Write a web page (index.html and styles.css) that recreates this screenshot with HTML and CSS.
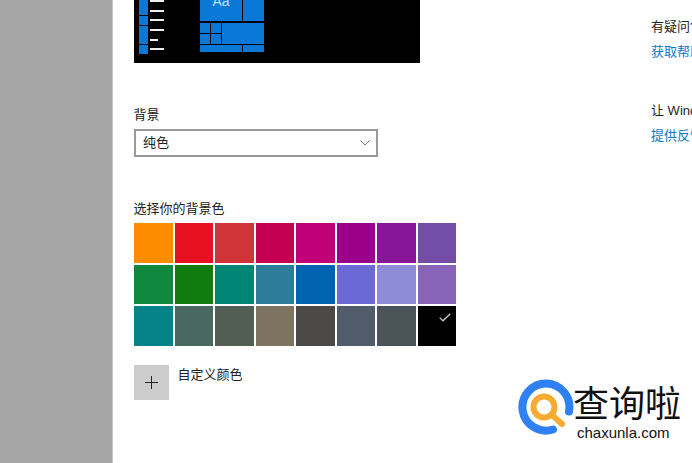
FILE: index.html
```html
<!DOCTYPE html>
<html lang="zh-CN">
<head>
  <meta charset="UTF-8">
  <meta name="viewport" content="width=device-width,initial-scale=1.0">
  <title>背景</title>
  <link rel="stylesheet" href="styles.css">
</head>
<body>

  <div class="sidebar"></div>

  <div class="main">
    <!-- preview of the desktop, top is cut off by the window -->
    <div class="preview">
      <div class="mini-menu">
        <div class="mini-row"><i></i><b></b></div>
        <div class="mini-row"><i></i><b></b></div>
        <div class="mini-row"><i></i><b></b></div>
        <div class="mini-row"><i></i><b></b></div>
        <div class="mini-row"><i></i><b class="short"></b></div>
        <div class="mini-row"><i></i><b></b></div>
      </div>
      <div class="mini-tiles">
        <div class="tiles-top">
          <div class="tile tile-aa">Aa</div>
          <div class="tile"></div>
        </div>
        <div class="tiles-mid">
          <div class="tile"></div>
          <div class="tile"></div>
          <div class="tile tile-big"></div>
          <div class="tile"></div>
          <div class="tile"></div>
        </div>
        <div class="tiles-bottom">
          <div class="tile"></div>
          <div class="tile"></div>
        </div>
      </div>
    </div>

    <div class="label">背景</div>
    <div class="select">
      <span>纯色</span>
      <svg class="chevron" width="10" height="6" viewBox="0 0 10 6"><path d="M.5.5 5 5 9.5.5" fill="none" stroke="#777" stroke-width="1"/></svg>
    </div>

    <div class="label">选择你的背景色</div>
    <div class="swatches">
      <div class="swatch c1"></div>
      <div class="swatch c2"></div>
      <div class="swatch c3"></div>
      <div class="swatch c4"></div>
      <div class="swatch c5"></div>
      <div class="swatch c6"></div>
      <div class="swatch c7"></div>
      <div class="swatch c8"></div>
      <div class="swatch c9"></div>
      <div class="swatch c10"></div>
      <div class="swatch c11"></div>
      <div class="swatch c12"></div>
      <div class="swatch c13"></div>
      <div class="swatch c14"></div>
      <div class="swatch c15"></div>
      <div class="swatch c16"></div>
      <div class="swatch c17"></div>
      <div class="swatch c18"></div>
      <div class="swatch c19"></div>
      <div class="swatch c20"></div>
      <div class="swatch c21"></div>
      <div class="swatch c22"></div>
      <div class="swatch c23"></div>
      <div class="swatch c24 selected">
        <svg width="12" height="9" viewBox="0 0 12 9"><path d="M.7 4.6 4 7.8 11.3.8" fill="none" stroke="#ccc" stroke-width="1.2"/></svg>
      </div>
    </div>

    <div class="custom">
      <div class="custom-btn">
        <svg width="13" height="13" viewBox="0 0 13 13"><path d="M6.5 0v13M0 6.5h13" stroke="#222" stroke-width="1"/></svg>
      </div>
      <span>自定义颜色</span>
    </div>
  </div>

  <div class="aside">
    <div class="help">
      <p>有疑问?</p>
      <a>获取帮助</a>
    </div>
    <div class="help">
      <p>让 Windows 变得更好</p>
      <a>提供反馈</a>
    </div>
  </div>

  <!-- watermark -->
  <div class="logo">
    <svg class="logo-icon" width="60" height="60" viewBox="0 0 60 60">
      <path d="M54 33.5A23.5 23.5 0 1 0 38 51.5" fill="none" stroke="#2f80f2" stroke-width="8" stroke-linecap="round"/>
      <circle cx="29" cy="29" r="10.5" fill="none" stroke="#f8ab32" stroke-width="6"/>
      <path d="M37 37 47 46" stroke="#f8ab32" stroke-width="6" stroke-linecap="round"/>
    </svg>
    <div class="logo-text">
      <div class="logo-cn">查询啦</div>
      <div class="logo-en">chaxunla.com</div>
    </div>
  </div>

</body>
</html>
```

FILE: styles.css
```css
*{box-sizing:border-box;margin:0;padding:0}
html,body{height:100%}
body{
  width:692px;
  height:463px;
  display:flex;
  overflow:hidden;
  position:relative;
  background:#fff;
  color:#222;
  font-family:"Liberation Sans","Noto Sans CJK SC",sans-serif;
  font-size:13px;
  line-height:20px;
}
.sidebar{
  flex:none;
  width:113px;
  background:#a6a6a6;
  border-right:1px solid #c4c4c4;
}
.main{
  flex:none;
  width:538px;
  padding-left:21px;
}
/* preview */
.preview{
  width:286px;
  height:63px;
  background:#000;
  display:flex;
  align-items:flex-start;
  padding-left:5px;
  overflow:hidden;
}
.mini-menu{
  width:61px;
  flex:none;
  margin-top:-3.5px;
}
.mini-row{
  display:flex;
  align-items:center;
  gap:2px;
  height:9.6px;
}
.mini-row i{
  width:9px;
  height:9px;
  background:#0a78d7;
}
.mini-row b{
  width:14px;
  height:2px;
  background:#eee;
}
.mini-row b.short{width:8px}
.mini-tiles{
  width:64px;
  flex:none;
  display:flex;
  flex-direction:column;
  gap:1px;
}
.tile{background:#0a78d7}
.tiles-top{
  display:grid;
  grid-template-columns:42px 21px;
  gap:1px;
  height:21px;
  margin-bottom:1px;
}
.tile-aa{
  color:#bfe3ff;
  font-size:14px;
  line-height:2px;
  text-align:center;
  overflow:hidden;
}
.tiles-mid{
  display:grid;
  grid-template-columns:10px 10px 42px;
  grid-template-rows:10px 10px;
  gap:1px;
}
.tile-big{grid-row:1 / 3;grid-column:3}
.tiles-bottom{
  display:grid;
  grid-template-columns:42px 21px;
  gap:1px;
  height:7px;
}
/* form */
.label{margin:42px 0 4px -.5px}
.select{
  width:244px;
  height:28px;
  border:2px solid #999;
  padding:0 6px 0 7px;
  display:flex;
  align-items:center;
  justify-content:space-between;
}
.swatches{
  width:322px;
  display:grid;
  grid-template-columns:repeat(8,1fr);
  grid-auto-rows:39.5px;
  gap:2px;
}
.swatch{position:relative}
.selected svg{
  position:absolute;
  top:7px;
  right:5px;
}
.c1{background:#ff8c00}
.c2{background:#e81123}
.c3{background:#d13438}
.c4{background:#c30052}
.c5{background:#bf0077}
.c6{background:#9a0089}
.c7{background:#881798}
.c8{background:#744da9}
.c9{background:#10893e}
.c10{background:#107c10}
.c11{background:#018574}
.c12{background:#2d7d9a}
.c13{background:#0063b1}
.c14{background:#6b69d6}
.c15{background:#8e8cd8}
.c16{background:#8764b8}
.c17{background:#038387}
.c18{background:#486860}
.c19{background:#525e54}
.c20{background:#7e735f}
.c21{background:#4c4a48}
.c22{background:#515c6b}
.c23{background:#4a5459}
.c24{background:#000}
.custom{
  margin-top:19.5px;
  display:flex;
  align-items:flex-start;
  gap:8.5px;
  line-height:20px;
}
.custom-btn{
  width:35px;
  height:35px;
  background:#ccc;
  display:flex;
  align-items:center;
  justify-content:center;
}
/* right column */
.aside{
  flex:none;
  width:41px;
  padding-top:17px;
  white-space:nowrap;
  overflow:hidden;
}
.help{margin-bottom:39px}
.help p{margin-bottom:5px}
.help a{color:#0a78c8}
/* watermark */
.logo{
  position:absolute;
  left:515px;
  top:378px;
  display:flex;
  background:#fff;
}
.logo-icon{flex:none}
.logo-text{margin-left:-2px;color:#111}
.logo-cn{
  font-family:"Noto Sans CJK SC",sans-serif;
  font-size:36px;
  line-height:47px;
  width:108px;
  white-space:nowrap;
}
.logo-en{
  font-size:15px;
  line-height:16px;
  padding-left:4px;
}
```
